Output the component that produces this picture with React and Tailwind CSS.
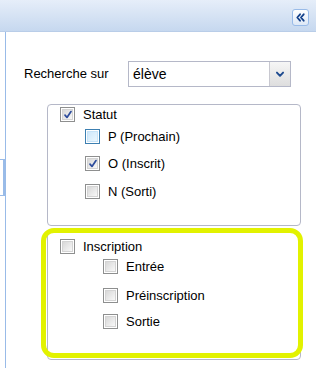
import React from "react";

function Check({ checked, hover }) {
  return (
    <span
      className={`relative inline-flex h-[15px] w-[15px] shrink-0 items-center justify-center border ${
        hover ? "border-[#3c7fb1]" : "border-[#8e8f8f]"
      }`}
    >
      <span
        className={`absolute inset-[1px] border ${
          hover
            ? "border-[#c6e3f8] bg-gradient-to-br from-[#cfe8fb] to-[#eaf6fd]"
            : "border-[#d4d4d4] bg-gradient-to-br from-[#d8d8d8] to-[#f8f8f8]"
        }`}
      />
      {checked && (
        <svg viewBox="0 0 14 14" className="relative h-[12px] w-[12px]">
          <path
            d="M3.5 7.2 L5.8 9.8 L10.5 3"
            fill="none"
            stroke="#2d4c9c"
            strokeWidth="2"
            strokeLinecap="round"
            strokeLinejoin="round"
          />
        </svg>
      )}
    </span>
  );
}

function Item({ label, checked, hover, className }) {
  return (
    <div className={`flex items-center gap-[8px] ${className}`}>
      <Check checked={checked} hover={hover} />
      <span className="leading-none">{label}</span>
    </div>
  );
}

export default function App() {
  return (
    <div
      className="relative h-[368px] w-[316px] overflow-hidden bg-white text-[13px] text-black"
      style={{ fontFamily: '"Liberation Sans", Arial, sans-serif' }}
    >
      {/* header bar */}
      <div className="flex h-[32px] items-start justify-end border-b border-[#b9cde8] bg-gradient-to-b from-[#e6eef9] to-[#c6d8ef] pr-[7px] pt-[9px]">
        <button className="flex h-[17px] w-[17px] items-center justify-center rounded-[3px] border border-[#99bbe8] bg-gradient-to-b from-[#ffffff] to-[#dde8f6]">
          <svg viewBox="0 0 12 12" className="h-[11px] w-[11px]">
            <path
              d="M5.5 2.5 L2.5 6 L5.5 9.5 M9.5 2.5 L6.5 6 L9.5 9.5"
              fill="none"
              stroke="#15428b"
              strokeWidth="2"
              strokeLinecap="round"
              strokeLinejoin="round"
            />
          </svg>
        </button>
      </div>

      <div className="flex">
        {/* left strip */}
        <div className="w-[5px] pt-[127px]">
          <div className="h-[37px] border-y border-r-2 border-[#99bbe8]" />
        </div>

        <div className="h-[340px] flex-1 border-l border-[#99bbe8] pl-[18px] pt-[29px]">
          <div className="flex items-center">
            <span className="w-[104px]">Recherche sur</span>
            <div className="flex h-[26px] w-[163px] border border-[#b5b8c8] bg-white">
              <div className="flex flex-1 items-center pl-[4px] text-[14px]">élève</div>
              <div className="flex w-[21px] items-center justify-center border-l border-[#c8c8d0] bg-gradient-to-b from-[#f6f6f6] to-[#dedede]">
                <svg viewBox="0 0 10 8" className="h-[7px] w-[10px]">
                  <path
                    d="M1.5 1.8 L5 5.5 L8.5 1.8"
                    fill="none"
                    stroke="#1d4a8f"
                    strokeWidth="2.2"
                    strokeLinecap="round"
                    strokeLinejoin="round"
                  />
                </svg>
              </div>
            </div>
          </div>

          {/* Statut */}
          <div className="ml-[23px] mt-[17px] h-[122px] w-[254px] rounded-[4px] border border-[#b5b8c8] pl-[12px] pt-[2px]">
            <Item label="Statut" checked />
            <div className="pl-[25px]">
              <Item label="P (Prochain)" hover className="mt-[7px]" />
              <Item label="O (Inscrit)" checked className="mt-[12px]" />
              <Item label="N (Sorti)" className="mt-[13px]" />
            </div>
          </div>

          {/* Inscription */}
          <div className="ml-[23px] mt-[6px] h-[128px] w-[254px] rounded-[4px] border border-[#b5b8c8] pl-[12px] pt-[6px]">
            <Item label="Inscription" />
            <div className="pl-[43px]">
              <Item label="Entrée" className="mt-[5px]" />
              <Item label="Préinscription" className="mt-[14px]" />
              <Item label="Sortie" className="mt-[11px]" />
            </div>
          </div>

          <div className="ml-[36px] mt-[4px] text-[#15428b]">Filtres complets</div>
        </div>
      </div>

      {/* yellow highlight annotation */}
      <div className="pointer-events-none absolute left-[41px] top-[228px] h-[130px] w-[262px] rounded-[13px] border-[5px] border-[#e2f200]" />
    </div>
  );
}
